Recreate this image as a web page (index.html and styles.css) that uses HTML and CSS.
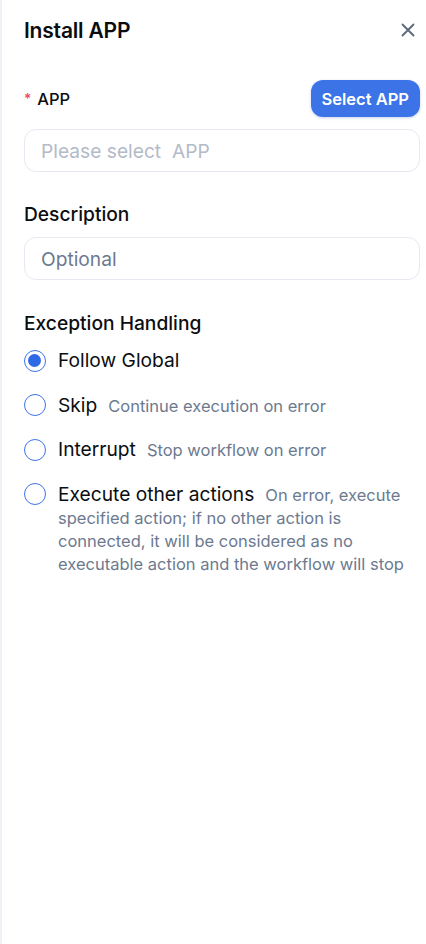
FILE: index.html
```html
<!DOCTYPE html>
<html>
<head>
<meta charset="utf-8">
<link rel="stylesheet" href="styles.css">
</head>
<body>
<div class="panel">
  <div class="header">
    <h1 class="title">Install APP</h1>
    <button class="close" aria-label="Close">
      <svg width="14" height="14" viewBox="0 0 14 14"><path d="M1.5 1.5 L12.5 12.5 M12.5 1.5 L1.5 12.5" stroke="#5b6679" stroke-width="1.8" stroke-linecap="round" fill="none"/></svg>
    </button>
  </div>

  <div class="field-head">
    <label class="label"><span class="req">*</span>APP</label>
    <button class="btn-primary">Select APP</button>
  </div>
  <div class="input placeholder-light">Please select&nbsp; APP</div>

  <div class="label block">Description</div>
  <div class="input placeholder-dark">Optional</div>

  <div class="label block section">Exception Handling</div>
  <div class="radios">
    <div class="radio-row">
      <span class="radio checked"></span>
      <div class="radio-text"><span class="opt">Follow Global</span></div>
    </div>
    <div class="radio-row">
      <span class="radio"></span>
      <div class="radio-text"><span class="opt">Skip</span><span class="desc">Continue execution on error</span></div>
    </div>
    <div class="radio-row">
      <span class="radio"></span>
      <div class="radio-text"><span class="opt">Interrupt</span><span class="desc">Stop workflow on error</span></div>
    </div>
    <div class="radio-row">
      <span class="radio"></span>
      <div class="radio-text"><span class="opt">Execute other actions</span><span class="desc">On error, execute specified action; if no other action is connected, it will be considered as no executable action and the workflow will stop</span></div>
    </div>
  </div>
</div>
</body>
</html>
```

FILE: styles.css
```css
html, body {
  margin: 0;
  padding: 0;
  background: #ffffff;
}
body {
  font-family: Inter, "Noto Sans", "Liberation Sans", sans-serif;
  color: #0c0d10;
}
.panel {
  min-height: 944px;
  box-sizing: border-box;
  border-left: 2px solid #f0f0f6;
  padding: 14px 6px 0 22px;
}
.header {
  display: flex;
  align-items: center;
  justify-content: space-between;
  height: 32px;
}
.title {
  margin: 0;
  font-size: 21px;
  font-weight: 600;
  letter-spacing: -0.2px;
}
.close {
  border: 0;
  background: none;
  padding: 0;
  width: 26px;
  height: 26px;
  display: flex;
  align-items: center;
  justify-content: center;
  margin-right: -1px;
}
.field-head {
  margin-top: 34px;
  display: flex;
  align-items: center;
  justify-content: space-between;
  height: 37px;
}
.label {
  font-size: 16.5px;
  font-weight: 500;
  display: flex;
  align-items: center;
}
.req {
  color: #f0475c;
  margin-right: 6px;
  font-size: 14px;
}
.btn-primary {
  border: 0;
  background: #3c74e8;
  color: #fff;
  font-family: inherit;
  font-size: 16.5px;
  font-weight: 600;
  height: 37px;
  padding: 0 11px;
  border-radius: 12px;
  box-shadow: 0 1px 3px rgba(40, 80, 180, 0.25);
}
.input {
  margin-top: 12px;
  height: 43px;
  box-sizing: border-box;
  border: 1px solid #e6e9ef;
  border-radius: 12px;
  padding: 0 16px;
  display: flex;
  align-items: center;
  font-size: 19.2px;
}
.placeholder-light { color: #b3bac8; margin-top: 12px; }
.placeholder-dark { color: #6c7a8f; margin-top: 11px; }
.block {
  margin-top: 30px;
  font-size: 19.2px;
  line-height: 24px;
}
.section {
  margin-top: 31px;
}
.radios {
  margin-top: 14px;
  display: flex;
  flex-direction: column;
  gap: 20.6px;
}
.radio-row {
  display: flex;
  align-items: flex-start;
}
.radio {
  flex: none;
  width: 22px;
  height: 22px;
  box-sizing: border-box;
  border: 1.5px solid #3d74ea;
  border-radius: 50%;
  margin-top: 0.5px;
  margin-right: 12px;
  position: relative;
}
.radio.checked::after {
  content: "";
  position: absolute;
  left: 3px;
  top: 3px;
  width: 13px;
  height: 13px;
  border-radius: 50%;
  background: #2f6ae6;
}
.radio-text {
  line-height: 23px;
}
.opt {
  font-size: 19.2px;
  color: #0c0d10;
  margin-right: 11px;
}
.desc {
  font-size: 16.5px;
  color: #6c7a8f;
}
```
